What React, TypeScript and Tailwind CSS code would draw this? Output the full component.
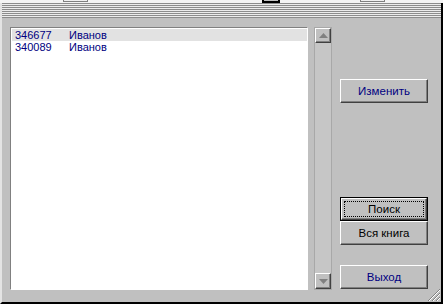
import React from "react";

const raised =
  "border border-t-white border-l-white border-r-[#404040] border-b-[#404040] shadow-[inset_-1px_-1px_0_#808080]";

function Btn({ label, navy, focused }: { label: string; navy?: boolean; focused?: boolean }) {
  if (focused) {
    return (
      <div className="h-[24px] border border-black">
        <div className={`h-full ${raised} flex items-center justify-center p-[2px]`}>
          <div className="w-full h-full border border-dotted border-black flex items-center justify-center text-black">
            {label}
          </div>
        </div>
      </div>
    );
  }
  return (
    <div
      className={`h-[24px] ${raised} flex items-center justify-center ${navy ? "text-[#000080]" : "text-black"}`}
    >
      {label}
    </div>
  );
}

export default function App() {
  return (
    <div
      className="w-[443px] h-[304px] bg-[#c0c0c0] overflow-hidden flex flex-col text-[11px] leading-[12px]"
      style={{ fontFamily: '"Liberation Sans", Arial, sans-serif' }}
    >
      {/* top strip with fragments */}
      <div className="h-[3px] bg-[#f4f4f4] flex shrink-0">
        <div className="w-[63px]" />
        <div className="w-[25px] h-[2px] border-l border-r border-b border-[#808080] bg-[#f0f0f0]" />
        <div className="w-[174px]" />
        <div className="w-[18px] h-[3px] border-l-2 border-r-2 border-b-2 border-black bg-[#c0c0c0]" />
        <div className="w-[80px]" />
        <div className="w-[25px] h-[2px] border-l border-r border-b border-[#808080] bg-[#f0f0f0]" />
      </div>
      <div className="flex-1 flex flex-col border-l-2 border-l-[#e4e4e4] border-r-2 border-r-black border-b-2 border-b-black relative">
        {/* striped band */}
        <div className="h-[15px] shrink-0 bg-[repeating-linear-gradient(to_bottom,#8c8c8c_0px,#8c8c8c_1px,#ececec_1px,#ececec_2px)]" />
        <div className="flex-1 flex pt-[9px] pl-[8px] pb-[11px]">
          {/* list */}
          <div className="w-[298px] h-[263px] border border-t-[#808080] border-l-[#808080] border-r-white border-b-white bg-white">
            <div className="pt-[1px] pl-[1px] text-[#000080]">
              <div className="h-[12px] bg-[#e2e2e2] flex">
                <span className="w-[57px] pl-[3px]">346677</span>
                <span>Иванов</span>
              </div>
              <div className="h-[12px] flex">
                <span className="w-[57px] pl-[3px]">340089</span>
                <span>Иванов</span>
              </div>
            </div>
          </div>
          {/* scrollbar */}
          <div className="ml-[6px] w-[18px] h-[263px] border border-[#a8a8a8] flex flex-col">
            <div className={`h-[15px] ${raised} flex items-center justify-center`}>
              <svg width="9" height="5" viewBox="0 0 9 5">
                <path d="M4.5 0 L9 5 L0 5 Z" fill="#808080" />
              </svg>
            </div>
            <div className="flex-1 bg-[#c6c6c6]" />
            <div className={`h-[16px] ${raised} flex items-center justify-center`}>
              <svg width="9" height="5" viewBox="0 0 9 5">
                <path d="M0 0 L9 0 L4.5 5 Z" fill="#808080" />
              </svg>
            </div>
          </div>
          {/* buttons */}
          <div className="ml-[8px] w-[88px] h-[263px] flex flex-col pt-[52px] pb-[1px] text-[11.5px]">
            <Btn label="Изменить" navy />
            <div className="flex-1" />
            <Btn label="Поиск" focused />
            <Btn label="Вся книга" />
            <div className="h-[20px]" />
            <Btn label="Выход" navy />
          </div>
        </div>
        {/* resize grip */}
        <svg className="absolute right-0 bottom-0" width="14" height="14" viewBox="0 0 14 14">
          <path d="M13 1 L1 13 M13 5 L5 13 M13 9 L9 13" stroke="#808080" strokeWidth="1" />
          <path d="M13 2 L2 13 M13 6 L6 13 M13 10 L10 13" stroke="#ffffff" strokeWidth="1" />
        </svg>
      </div>
    </div>
  );
}
